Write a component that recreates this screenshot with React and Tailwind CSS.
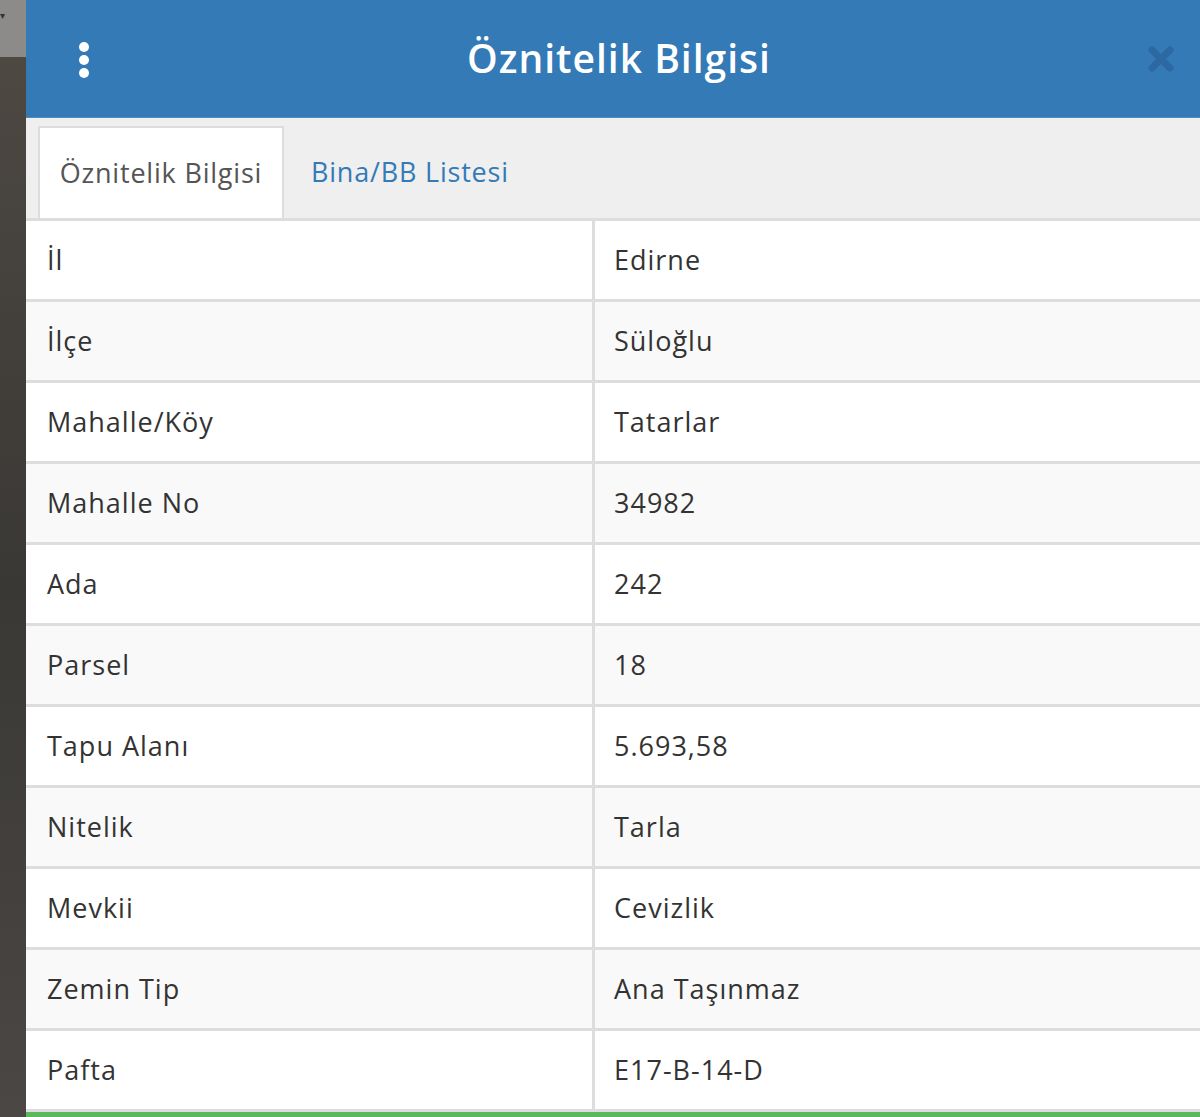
import React from "react";

const rows = [
  ["İl", "Edirne"],
  ["İlçe", "Süloğlu"],
  ["Mahalle/Köy", "Tatarlar"],
  ["Mahalle No", "34982"],
  ["Ada", "242"],
  ["Parsel", "18"],
  ["Tapu Alanı", "5.693,58"],
  ["Nitelik", "Tarla"],
  ["Mevkii", "Cevizlik"],
  ["Zemin Tip", "Ana Taşınmaz"],
  ["Pafta", "E17-B-14-D"],
];

export default function App() {
  return (
    <div className="flex h-[1117px] w-[1200px] overflow-hidden font-['Open_Sans',sans-serif]">
      {/* map behind the panel */}
      <div className="flex w-[26px] shrink-0 flex-col">
        <div className="relative h-[57px] bg-[#8c8b89]">
          <span className="absolute left-0 top-[10px] text-[10px] leading-none text-[#333]">▾</span>
        </div>
        <div className="flex-1 bg-gradient-to-b from-[#4d4842] via-[#3a3835] to-[#4a4744]" />
      </div>

      <main className="flex flex-1 flex-col bg-white">
        <header className="flex h-[118px] shrink-0 items-center border-b border-[#4a8cc6] bg-[#337ab7] pl-[51px] pr-[25px]">
          <div className="flex w-[14px] flex-col items-center gap-[3px] pt-[2px]">
            <span className="h-[10px] w-[10px] rounded-full bg-white" />
            <span className="h-[10px] w-[10px] rounded-full bg-white" />
            <span className="h-[10px] w-[10px] rounded-full bg-white" />
          </div>
          <h1 className="flex-1 text-center text-[39px] font-semibold tracking-[1px] text-white">Öznitelik Bilgisi</h1>
          <svg width="28" height="28" viewBox="0 0 28 28">
            <path d="M5 5 L23 23 M23 5 L5 23" stroke="#2c69a2" strokeWidth="7" strokeLinecap="round" />
          </svg>
        </header>

        <nav className="flex h-[103px] shrink-0 items-end border-b-[3px] border-[#dddddd] bg-[#efefef] pl-[12px]">
          <div className="flex h-[92px] w-[246px] items-center justify-center border-x-2 border-t-2 border-[#dddddd] bg-white text-[27px] tracking-[0.8px] text-[#555]">
            Öznitelik Bilgisi
          </div>
          <div className="flex h-[92px] items-center px-[27px] text-[27px] tracking-[0.8px] text-[#337ab7]">Bina/BB Listesi</div>
        </nav>

        <div className="flex flex-col">
          {rows.map(([label, value], i) => (
            <div
              key={label}
              className={`grid h-[81px] grid-cols-[569px_1fr] border-b-[3px] border-[#dddddd] text-[27px] tracking-[1px] text-[#333] ${i % 2 ? "bg-[#f9f9f9]" : "bg-white"}`}
            >
              <div className="flex items-center border-r-[3px] border-[#dddddd] pl-[21px]">{label}</div>
              <div className="flex items-center pl-[19px]">{value}</div>
            </div>
          ))}
        </div>
        <div className="mt-auto h-[5px] bg-[#5cb85c]" />
      </main>
    </div>
  );
}
